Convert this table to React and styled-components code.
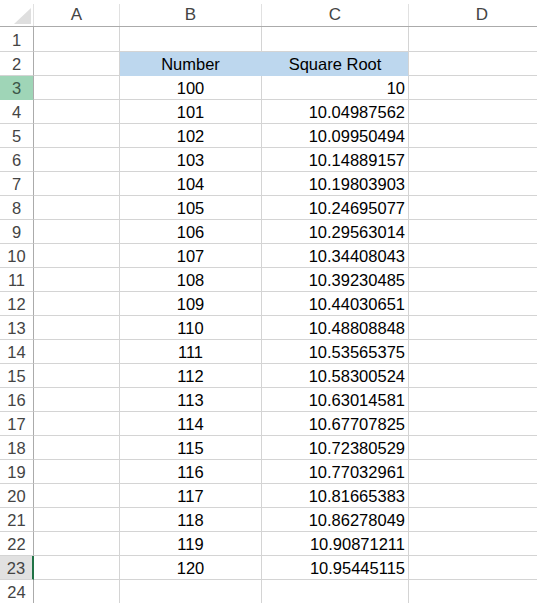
import React from "react"
import styled, { createGlobalStyle } from "styled-components"

const GlobalStyle = createGlobalStyle`
  body {
    margin: 0;
    background: #fff;
    font-family: "Liberation Sans", Arial, sans-serif;
  }
`

const Sheet = styled.div`
  width: 537px;
  height: 603px;
  overflow: hidden;
  background: #fff;
`

const Grid = styled.div`
  display: grid;
  grid-template-columns: 34px 86px 142px 147px 147px;
  grid-template-rows: 27px 25px;
  grid-auto-rows: 24px;
  width: 556px;
  font-size: 16.5px;
  color: #000;
`

const HeaderCell = styled.div`
  box-sizing: border-box;
  padding-top: 4px;
  border-bottom: 1px solid #ababab;
`

const HeaderLabel = styled.div`
  box-sizing: border-box;
  height: 22px;
  border-right: 1px solid #e1e1e1;
  display: flex;
  align-items: center;
  justify-content: center;
  color: #444;
  font-size: 17px;
  position: relative;
`

const Corner = styled.svg`
  position: absolute;
  left: 14px;
  top: 4px;
`

const RowHead = styled.div`
  box-sizing: border-box;
  border-right: 1px solid ${p => (p.$state === "active" ? "#217346" : "#ababab")};
  border-bottom: 1px solid ${p => (p.$state === "selected" ? "#9fd5b7" : "#d4d4d4")};
  background: ${p =>
    p.$state === "selected" ? "#9fd5b7" : p.$state === "active" ? "#e1e1e1" : "#fff"};
  color: ${p => (p.$state === "selected" ? "#3b5647" : "#444")};
  display: flex;
  align-items: flex-end;
  justify-content: center;
  padding-bottom: 1px;
  line-height: 19px;
  ${p => p.$state === "active" && "border-right-width: 2px;"}
`

const Cell = styled.div`
  box-sizing: border-box;
  border-right: 1px solid ${p => (p.$fill && !p.$last ? p.$fill : "#d4d4d4")};
  border-bottom: 1px solid ${p => p.$fill || "#d4d4d4"};
  background: ${p => p.$fill || "#fff"};
  display: flex;
  align-items: flex-end;
  justify-content: ${p => (p.$align === "right" ? "flex-end" : "center")};
  padding: 0 3px 1px 3px;
  line-height: 19px;
  white-space: nowrap;
`

const roots = [
  "10", "10.04987562", "10.09950494", "10.14889157", "10.19803903",
  "10.24695077", "10.29563014", "10.34408043", "10.39230485", "10.44030651",
  "10.48808848", "10.53565375", "10.58300524", "10.63014581", "10.67707825",
  "10.72380529", "10.77032961", "10.81665383", "10.86278049", "10.90871211",
  "10.95445115",
]

const FILL = "#bdd7ee"

const rowState = n => (n === 3 ? "selected" : n === 23 ? "active" : undefined)

const App = () => {
  const rows = []
  for (let n = 1; n <= 24; n++) {
    let b = ""
    let c = ""
    let fill
    if (n === 2) {
      b = "Number"
      c = "Square Root"
      fill = FILL
    } else if (n >= 3 && n <= 23) {
      b = String(97 + n)
      c = roots[n - 3]
    }
    rows.push(
      <React.Fragment key={n}>
        <RowHead $state={rowState(n)}>{n}</RowHead>
        <Cell />
        <Cell $fill={fill}>{b}</Cell>
        <Cell $fill={fill} $last $align={n === 2 ? "center" : "right"}>{c}</Cell>
        <Cell />
      </React.Fragment>
    )
  }

  return (
    <Sheet>
      <GlobalStyle />
      <Grid>
        <HeaderCell>
          <HeaderLabel>
            <Corner width="18" height="17" viewBox="0 0 18 17">
              <polygon points="17,0 17,16 0,16" fill="#dfdfdf" />
            </Corner>
          </HeaderLabel>
        </HeaderCell>
        {["A", "B", "C", "D"].map(col => (
          <HeaderCell key={col}>
            <HeaderLabel>{col}</HeaderLabel>
          </HeaderCell>
        ))}
        {rows}
      </Grid>
    </Sheet>
  )
}

export default App
